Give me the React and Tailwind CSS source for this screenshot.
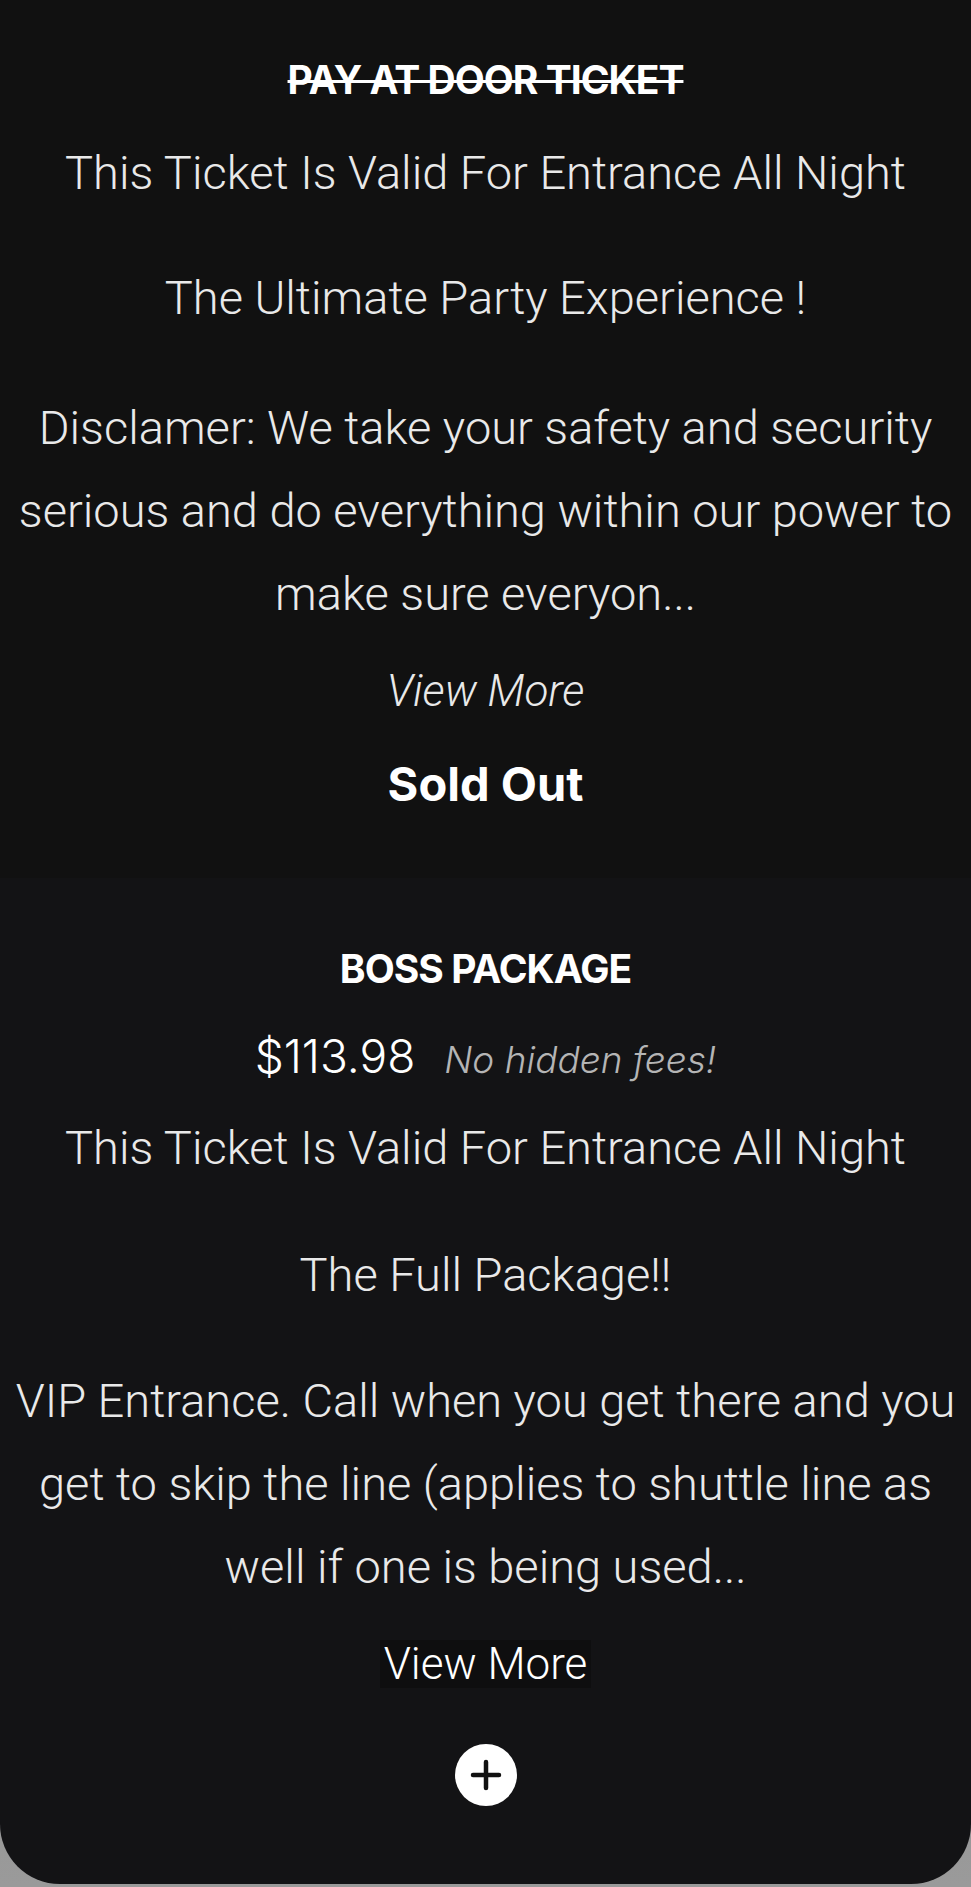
import React from 'react';

const roboto = "font-['Roboto',sans-serif] font-light text-[#e9e9e9]";
const body = `${roboto} text-[47px] leading-[83px]`;
const inter = "font-['Inter',sans-serif]";

function PlusButton() {
  return (
    <button className="w-[62px] h-[62px] rounded-full bg-white flex items-center justify-center">
      <svg width="32" height="32" viewBox="0 0 32 32" fill="none">
        <path d="M16 3v26M3 16h26" stroke="#111" strokeWidth="4.5" strokeLinecap="round" />
      </svg>
    </button>
  );
}

export default function App() {
  return (
    <div className="min-h-screen bg-gradient-to-b from-[#6b6b6b] to-[#9a9a9a]">
      <div className="w-[971px] h-[1884px] rounded-b-[60px] overflow-hidden flex flex-col">
        {/* sold out ticket */}
        <section className="h-[878px] shrink-0 bg-[#111111] flex flex-col items-center text-center px-[8px]">
          <h2 className={`${inter} font-bold text-white mt-[55px] text-[39px] leading-[50px] tracking-tight line-through decoration-[3px]`}>
            PAY AT DOOR TICKET
          </h2>
          <p className={`${body} mt-[26px]`}>This Ticket Is Valid For Entrance All Night</p>
          <p className={`${body} mt-[42px]`}>The Ultimate Party Experience !</p>
          <p className={`${body} mt-[47px]`}>
            Disclamer: We take your safety and security serious and do everything within our power to make sure everyon...
          </p>
          <button className={`${roboto} italic text-[44px] leading-[60px] mt-[26px]`}>View More</button>
          <div className={`${inter} font-bold text-white text-[47px] leading-[60px] mt-[33px]`}>Sold Out</div>
        </section>

        {/* boss package */}
        <section className="flex-1 bg-[#131315] flex flex-col items-center text-center px-[8px]">
          <h2 className={`${inter} font-bold text-white mt-[66px] text-[39px] leading-[50px] tracking-tight`}>BOSS PACKAGE</h2>
          <div className="mt-[32px] flex items-baseline gap-[29px] leading-[60px]">
            <span className={`${inter} font-light text-[46px] text-white`}>$113.98</span>
            <span className={`${inter} font-light italic text-[37px] text-[#b5b5b5]`}>No hidden fees!</span>
          </div>
          <p className={`${body} mt-[16px]`}>This Ticket Is Valid For Entrance All Night</p>
          <p className={`${body} mt-[44px]`}>The Full Package!!</p>
          <p className={`${body} mt-[43px]`}>
            VIP Entrance. Call when you get there and you get to skip the line (applies to shuttle line as well if one is being used...
          </p>
          <button className={`${roboto} text-[44px] leading-[48px] mt-[32px] px-[4px] bg-[#0e0e0f] !text-white`}>View More</button>
          <div className="mt-[56px]">
            <PlusButton />
          </div>
        </section>
      </div>
    </div>
  );
}
